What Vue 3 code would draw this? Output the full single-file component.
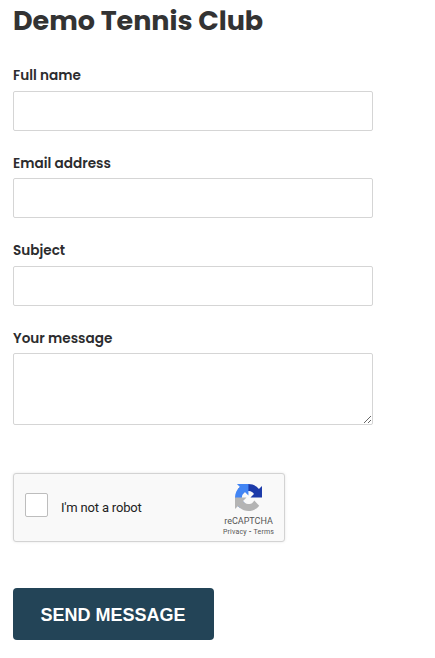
<script setup>
import { ref } from 'vue'

const fields = ref([
  { id: 'name', label: 'Full name', type: 'text', value: '' },
  { id: 'email', label: 'Email address', type: 'email', value: '' },
  { id: 'subject', label: 'Subject', type: 'text', value: '' },
])
const message = ref('')
</script>

<template>
  <form class="contact" @submit.prevent>
    <h1>Demo Tennis Club</h1>
    <div v-for="f in fields" :key="f.id" class="field">
      <label :for="f.id">{{ f.label }}</label>
      <input :id="f.id" v-model="f.value" :type="f.type" />
    </div>
    <div class="field">
      <label for="message">Your message</label>
      <textarea id="message" v-model="message"></textarea>
    </div>
    <div class="captcha">
      <span class="box" role="checkbox" aria-checked="false"></span>
      <span class="robot">I'm not a robot</span>
      <div class="brand">
        <svg viewBox="0 0 64 64" width="27" height="27">
          <path fill="#1c3aa9" d="M64 31.955l-.033-1.37V4.687l-7.16 7.16C50.948 4.674 42.033.093 32.05.093c-10.4 0-19.622 4.96-25.458 12.64l11.736 11.86a15.55 15.55 0 0 1 4.754-5.334c2.05-1.6 4.952-2.906 8.968-2.906.485 0 .86.057 1.135.163 4.976.393 9.288 3.14 11.828 7.124l-8.307 8.307L64 31.953" />
          <path fill="#4285f4" d="M31.862.094l-1.37.033H4.594l7.16 7.16C4.58 13.147 0 22.06 0 32.046c0 10.4 4.96 19.622 12.64 25.458L24.5 45.768a15.55 15.55 0 0 1-5.334-4.754c-1.6-2.05-2.906-4.952-2.906-8.968 0-.485.057-.86.163-1.135.393-4.976 3.14-9.288 7.124-11.828l8.307 8.307L31.86.095" />
          <path fill="#b4b4b4" d="M.001 32.045l.033 1.37v25.898l7.16-7.16c5.86 7.173 14.774 11.754 24.76 11.754 10.4 0 19.622-4.96 25.458-12.64l-11.736-11.86a15.55 15.55 0 0 1-4.754 5.334c-2.05 1.6-4.952 2.906-8.968 2.906-.485 0-.86-.057-1.135-.163-4.976-.393-9.288-3.14-11.828-7.124l8.307-8.307c-10.522.04-22.4.066-27.295-.005" />
        </svg>
        <span class="brand-name">reCAPTCHA</span>
        <span class="links">Privacy <b>-</b> Terms</span>
      </div>
    </div>
    <button type="submit">SEND MESSAGE</button>
  </form>
</template>

<style>
body {
  margin: 0;
  background: #fff;
}
</style>

<style scoped>
.contact {
  box-sizing: border-box;
  width: 373px;
  padding: 1px 0 0 13px;
  color: #333;
  font-family: Poppins, Inter, sans-serif;
}
h1 {
  margin: 0 0 23.15px;
  font-size: 27px;
  line-height: 40px;
  font-weight: 700;
  letter-spacing: -0.03px;
  white-space: nowrap;
}
.field {
  display: flex;
  flex-direction: column;
  margin-bottom: 21.1px;
}
label {
  height: 21px;
  margin-bottom: 5.4px;
  color: #2c2c2e;
  font-size: 13.6px;
  line-height: 24px;
  font-weight: 600;
}
input,
textarea {
  box-sizing: border-box;
  width: 360px;
  height: 40px;
  margin: 0;
  padding: 8px 10px;
  border: 1px solid #d5d5d5;
  border-radius: 2px;
  background: #fff;
  font: 14px "Liberation Sans", sans-serif;
  outline: none;
}
textarea {
  height: 72px;
  resize: both;
}
.captcha {
  box-sizing: border-box;
  display: flex;
  width: 272px;
  height: 69px;
  margin-top: 47.9px;
  padding: 0 0 0 11px;
  border: 1px solid #d3d3d3;
  border-radius: 3px;
  background: #f9f9f9;
  box-shadow: 0 0 3px rgba(0, 0, 0, 0.1);
  color: #222;
  font-family: Roboto, sans-serif;
}
.box {
  box-sizing: border-box;
  width: 23px;
  height: 24px;
  margin-top: 19px;
  border: 1px solid #bdbdbd;
  border-radius: 2px;
  background: #fff;
}
.robot {
  margin: 25px 0 0 13px;
  font-size: 13px;
  line-height: 17px;
  letter-spacing: -0.18px;
}
.brand {
  display: flex;
  flex-direction: column;
  align-items: center;
  width: 71px;
  margin-left: auto;
  padding-top: 10px;
  color: #555;
}
.brand-name {
  margin-top: 4px;
  font-size: 9px;
  line-height: 12px;
}
.links {
  font-size: 7px;
  line-height: 10px;
  letter-spacing: 0.18px;
  white-space: nowrap;
}
button {
  display: block;
  width: 201px;
  height: 52px;
  margin-top: 46px;
  padding: 3px 1px 0 0;
  border: 0;
  border-radius: 4px;
  background: #234457;
  color: #fff;
  font: bold 18px "Liberation Sans", sans-serif;
}
</style>
